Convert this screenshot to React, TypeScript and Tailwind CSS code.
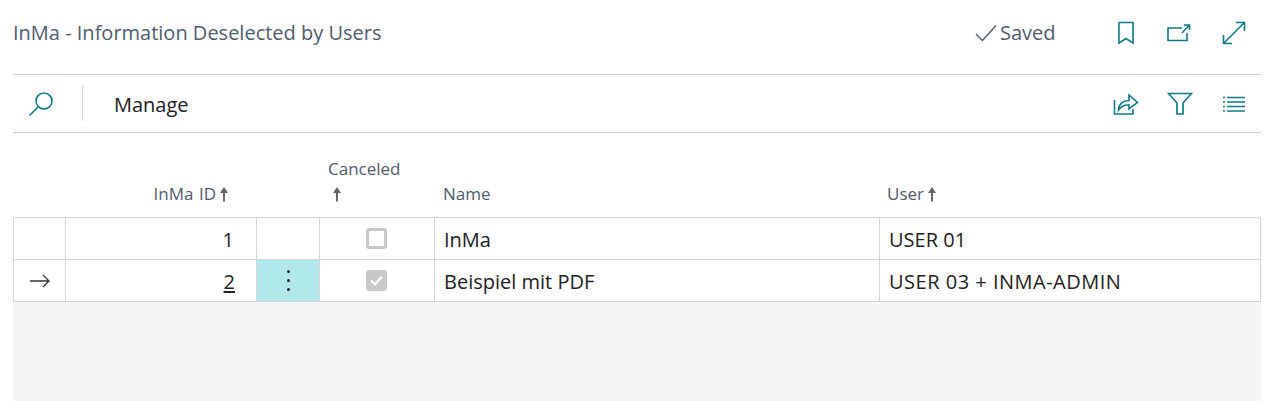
const teal = 'stroke-[#0f7b83]'

function SortArrow() {
  return (
    <svg width="10" height="16" viewBox="0 0 10 16" className="fill-[#666]">
      <path d="M5 1 L9 7 H6 V15.5 H4 V7 H1 Z" />
    </svg>
  )
}

function Cell({ className = '', children }: { className?: string; children?: React.ReactNode }) {
  return <div className={`flex items-center border-l border-[#d5d6da] ${className}`}>{children}</div>
}

function Check({ checked }: { checked?: boolean }) {
  return (
    <div className={`mr-[2px] flex h-[21px] w-[21px] items-center justify-center rounded-[3px] border-[3px] border-[#c8c8c8] ${checked ? 'bg-[#c8c8c8]' : 'bg-white'}`}>
      {checked && (
        <svg width="15" height="13" viewBox="0 0 15 13" fill="none" className="stroke-white" strokeWidth="2.2">
          <path d="M2 6.5 L6 10.5 L13 2.5" />
        </svg>
      )}
    </div>
  )
}

const rowText = 'text-[20px] leading-none text-[#212121] pt-[3px]'
const cols = 'grid grid-cols-[52px_191px_63px_115px_445px_1fr]'

export default function App() {
  return (
    <div className="h-[401px] w-[1276px] overflow-hidden bg-white pl-[13px] pr-[15px] font-['Open_Sans','Noto_Sans',sans-serif]">
      {/* title bar */}
      <div className="flex h-[75px] items-center border-b border-[#d0d0d0] pb-[9px]">
        <h1 className="flex-1 text-[20px] font-normal text-[#505c6d]">InMa - Information Deselected by Users</h1>
        <svg width="22" height="18" viewBox="0 0 22 18" fill="none" className="stroke-[#505c6d]" strokeWidth="1.4">
          <path d="M1 10 L7.5 16.5 L21 1.5" />
        </svg>
        <span className="ml-[3px] w-[57px] text-[20px] text-[#505c6d]">Saved</span>
        <div className="ml-[60px] mr-[15px] flex items-center">
          <svg width="18" height="24" viewBox="0 0 18 24" fill="none" className={teal} strokeWidth="1.6">
            <path d="M2 1.5 H16 V22 L9 17.5 L2 22 Z" />
          </svg>
          <svg width="24" height="20" viewBox="0 0 24 20" fill="none" className={`ml-[32px] ${teal}`} strokeWidth="1.6">
            <path d="M15 5 H1 V17.5 H20 V10" />
            <path d="M15 10 L22 2.5 M17 2 H22.5 V7" />
          </svg>
          <svg width="24" height="24" viewBox="0 0 24 24" fill="none" className={`ml-[31px] ${teal}`} strokeWidth="1.6">
            <path d="M1.5 22.5 L22.5 1.5 M14 1.5 H22.5 V10 M1.5 14 V22.5 H10" />
          </svg>
        </div>
      </div>

      {/* action bar */}
      <div className="flex h-[58px] items-center border-b border-[#d0d0d0]">
        <svg width="26" height="26" viewBox="0 0 26 26" fill="none" className={`ml-[15px] ${teal}`} strokeWidth="1.6">
          <circle cx="16" cy="10" r="8" />
          <path d="M10 16 L1.5 24.5" />
        </svg>
        <div className="ml-[28px] h-[35px] w-px bg-[#d5d5d5]" />
        <span className="ml-[31px] flex-1 pt-[3px] text-[20px] text-[#212121]">Manage</span>
        <svg width="26" height="24" viewBox="0 0 26 24" fill="none" className={teal} strokeWidth="1.6">
          <path d="M1.5 8 V22 H20 V17" />
          <path d="M5.5 18 C6 12 10 8.5 16 8.5 V3 L24.5 10.5 L16 17 V13 C11 12.5 8 14.5 5.5 18 Z" />
        </svg>
        <svg width="26" height="24" viewBox="0 0 26 24" fill="none" className={`ml-[28px] ${teal}`} strokeWidth="1.7">
          <path d="M1.5 1.5 H24.5 L16 11 V22 H10 V11 Z" />
        </svg>
        <svg width="22" height="16" viewBox="0 0 22 16" fill="none" className={`ml-[30px] mr-[16px] ${teal}`} strokeWidth="1.6">
          <path d="M0 1.5 H2 M4 1.5 H22 M0 6 H2 M4 6 H22 M0 10.5 H2 M4 10.5 H22 M0 15 H2 M4 15 H22" />
        </svg>
      </div>

      {/* column headers */}
      <div className={`${cols} h-[84px] text-[17px] leading-[24px] text-[#505c6d]`}>
        <div />
        <div className="flex items-end justify-end gap-[3px] pb-[11px] pr-[27px] [word-spacing:1px]">
          InMa ID <span className="mb-[4px]"><SortArrow /></span>
        </div>
        <div />
        <div className="flex flex-col items-start justify-end pb-[11px] pl-[9px]">
          <span>Canceled</span>
          <span className="ml-[4px] mt-[1px] flex h-[24px] items-center"><SortArrow /></span>
        </div>
        <div className="flex items-end pb-[11px] pl-[9px]">Name</div>
        <div className="flex items-end gap-[3px] pb-[11px] pl-[8px]">
          User <span className="mb-[4px]"><SortArrow /></span>
        </div>
      </div>

      {/* rows */}
      <div className="h-[184px] bg-[#f4f5f7]">
        <div className="border-y border-r border-[#d5d6da] bg-white">
          <div className={`${cols} h-[42px] border-b border-[#d5d6da]`}>
            <Cell />
            <Cell className={`justify-end pr-[22px] ${rowText}`}>1</Cell>
            <Cell />
            <Cell className="justify-center"><Check /></Cell>
            <Cell className={`pl-[9px] ${rowText}`}>InMa</Cell>
            <Cell className={`pl-[9px] ${rowText}`}>USER 01</Cell>
          </div>
          <div className={`${cols} h-[41px]`}>
            <Cell className="justify-center">
              <svg width="20" height="14" viewBox="0 0 20 14" fill="none" className="stroke-[#333]" strokeWidth="1.3">
                <path d="M0 7 H19 M13 1 L19 7 L13 13" />
              </svg>
            </Cell>
            <Cell className={`justify-end pr-[21px] underline underline-offset-2 ${rowText}`}>2</Cell>
            <Cell className="flex-col justify-center gap-[6px] bg-[#b1e8eb]">
              <span className="h-[3px] w-[3px] rounded-full bg-[#222]" />
              <span className="h-[3px] w-[3px] rounded-full bg-[#222]" />
              <span className="h-[3px] w-[3px] rounded-full bg-[#222]" />
            </Cell>
            <Cell className="justify-center"><Check checked /></Cell>
            <Cell className={`pl-[9px] ${rowText}`}>Beispiel mit PDF</Cell>
            <Cell className={`pl-[9px] tracking-[0.5px] ${rowText}`}>USER 03 + INMA-ADMIN</Cell>
          </div>
        </div>
      </div>
    </div>
  )
}
